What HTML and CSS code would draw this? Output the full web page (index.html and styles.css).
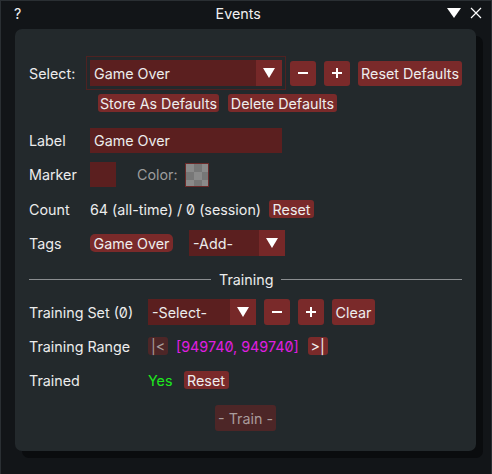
FILE: index.html
```html
<!DOCTYPE html>
<html>
<head>
<meta charset="utf-8">
<link rel="stylesheet" href="styles.css">
</head>
<body>
<div class="window">
  <div class="titlebar">
    <span class="help">?</span>
    <span class="title">Events</span>
    <span class="ctrls">
      <svg class="ico-tri" width="14" height="10" viewBox="0 0 14 10"><polygon points="0,0 14,0 7,10" fill="#fff"/></svg>
      <svg class="ico-x" width="12" height="12" viewBox="0 0 12 12"><path d="M1 1 L11 11 M11 1 L1 11" stroke="#fff" stroke-width="1.2"/></svg>
    </span>
  </div>
  <div class="panel">
    <div class="row r-select">
      <span class="lbl l-select">Select:</span>
      <div class="frame">
        <div class="combo c-select"><span class="ctext">Game Over</span><span class="carrow"><svg width="12" height="10" viewBox="0 0 12 10"><polygon points="0,0 12,0 6,10" fill="#fff"/></svg></span></div>
      </div>
      <button class="btn sq b-minus"><svg width="12" height="12" viewBox="0 0 12 12"><rect x="1" y="5" width="10" height="2" fill="#fff"/></svg></button>
      <button class="btn sq b-plus"><svg width="12" height="12" viewBox="0 0 12 12"><rect x="1" y="5" width="10" height="2" fill="#fff"/><rect x="5" y="1" width="2" height="10" fill="#fff"/></svg></button>
      <button class="btn b-tall b-resetdef">Reset Defaults</button>
    </div>
    <div class="row r-defaults">
      <button class="btn b-small b-store">Store As Defaults</button>
      <button class="btn b-small b-delete">Delete Defaults</button>
    </div>
    <div class="row r-label">
      <span class="lbl l-main">Label</span>
      <div class="input">Game Over</div>
    </div>
    <div class="row r-marker">
      <span class="lbl l-main">Marker</span>
      <div class="swatch"></div>
      <span class="dim">Color:</span>
      <div class="checker"></div>
    </div>
    <div class="row r-count">
      <span class="lbl l-main">Count</span>
      <span class="txt">64 (all-time) / 0 (session)</span>
      <button class="btn b-small b-reset1">Reset</button>
    </div>
    <div class="row r-tags">
      <span class="lbl l-main">Tags</span>
      <button class="btn b-small b-tag">Game Over</button>
      <div class="combo c-add"><span class="ctext">-Add-</span><span class="carrow"><svg width="12" height="10" viewBox="0 0 12 10"><polygon points="0,0 12,0 6,10" fill="#fff"/></svg></span></div>
    </div>
    <div class="row r-sep">
      <span class="line l1"></span>
      <span class="septext">Training</span>
      <span class="line l2"></span>
    </div>
    <div class="row r-tset">
      <span class="lbl l-train">Training Set (0)</span>
      <div class="combo c-tset"><span class="ctext">-Select-</span><span class="carrow"><svg width="12" height="10" viewBox="0 0 12 10"><polygon points="0,0 12,0 6,10" fill="#fff"/></svg></span></div>
      <button class="btn sq b-minus2"><svg width="12" height="12" viewBox="0 0 12 12"><rect x="1" y="5" width="10" height="2" fill="#fff"/></svg></button>
      <button class="btn sq b-plus"><svg width="12" height="12" viewBox="0 0 12 12"><rect x="1" y="5" width="10" height="2" fill="#fff"/><rect x="5" y="1" width="2" height="10" fill="#fff"/></svg></button>
      <button class="btn b-tall b-clear">Clear</button>
    </div>
    <div class="row r-range">
      <span class="lbl l-train">Training Range</span>
      <button class="btn b-small b-dis b-first">|&lt;</button>
      <span class="magenta">[949740, 949740]</span>
      <button class="btn b-small b-last">&gt;|</button>
    </div>
    <div class="row r-trained">
      <span class="lbl l-train">Trained</span>
      <span class="green">Yes</span>
      <button class="btn b-small b-reset2">Reset</button>
    </div>
    <div class="row r-train">
      <button class="btn b-tall b-dis b-trainbtn">- Train -</button>
    </div>
  </div>
</div>
</body>
</html>
```

FILE: styles.css
```css
* { box-sizing: border-box; }
html, body {
  margin: 0;
  padding: 0;
  width: 492px;
  height: 474px;
  overflow: hidden;
  background: #121518;
  font-family: Inter, "Noto Sans", sans-serif;
  font-size: 14.3px;
  font-feature-settings: "zero" 1;
  color: #ececec;
  white-space: nowrap;
}
.window {
  width: 492px;
  height: 490px;
  border: 1px solid #2a2f33;
  background: #121518;
}
.titlebar {
  height: 24px;
  display: flex;
  align-items: center;
  padding: 0 9px 0 13px;
}
.help { color: #f0f0f0; }
.title {
  flex: 1;
  text-align: center;
  color: #f0f0f0;
  padding-left: 8px;
}
.ctrls { display: flex; align-items: center; gap: 9px; }

.panel {
  margin-top: 4px;
  margin-left: 14px;
  width: 461px;
  height: 422px;
  background: #23292c;
  border-radius: 7px;
  box-shadow: 7px 7px 0 0 #0a0c0e;
  padding: 27px 14px 0 14px;
}
.row { display: flex; align-items: center; }
.lbl { flex: none; }
.l-select { width: 57px; }
.l-main { width: 61px; }
.l-train { width: 119px; }

.btn {
  border: none;
  background: #7a2a2a;
  color: #eeeeee;
  font: inherit;
  font-feature-settings: "zero" 1;
  white-space: nowrap;
  border-radius: 3px;
  padding: 0;
  display: flex;
  align-items: center;
  justify-content: center;
  flex: none;
}
.btn.sq { width: 26px; height: 25px; }
.b-tall { height: 25px; }
.b-small { height: 18px; }
.b-dis { background: #4d2627; color: #a99c9c; }

.r-select { height: 34px; }
.frame {
  width: 200px;
  height: 34px;
  border: 1px solid #4e2222;
  padding: 3px;
  flex: none;
}
.combo {
  display: flex;
  height: 100%;
  background: #5b1f1f;
  flex: none;
}
.ctext { flex: 1; padding-left: 4px; display: flex; align-items: center; }
.carrow {
  width: 26px;
  background: #762828;
  display: flex;
  align-items: center;
  justify-content: center;
}
.c-select { height: 26px; }
.b-minus { margin-left: 4px; }
.b-plus { margin-left: 8px; }
.b-resetdef { margin-left: 8px; width: 104px; }

.r-defaults { margin-top: 4px; height: 18px; padding-left: 69px; }
.b-store { width: 121px; }
.b-delete { margin-left: 9px; width: 109px; }

.r-label { margin-top: 16px; height: 25px; }
.input {
  width: 192px;
  height: 25px;
  background: #5b1f1f;
  padding-left: 4px;
  display: flex;
  align-items: center;
}

.r-marker { margin-top: 9px; height: 25px; }
.swatch { width: 26px; height: 25px; background: #5b1f1f; }
.dim { color: #9c9c9c; margin-left: 21px; }
.checker {
  margin-left: 7px;
  width: 24px;
  height: 24px;
  border: 1px solid #6a2a2a;
  background-color: #8a8a8a;
  background-image:
    linear-gradient(45deg, #777 25%, transparent 25%, transparent 75%, #777 75%),
    linear-gradient(45deg, #777 25%, transparent 25%, transparent 75%, #777 75%);
  background-size: 16px 16px;
  background-position: 0 0, 8px 8px;
}

.r-count { margin-top: 13px; height: 18px; }
.b-reset1 { margin-left: 8px; width: 45px; }

.r-tags { margin-top: 12px; height: 26px; }
.b-tag { border-radius: 5px; width: 83px; }
.c-add { margin-left: 16px; width: 96px; height: 26px; }

.r-sep { margin-top: 14px; height: 18px; }
.line { height: 1px; background: #8a8d90; }
.l1 { width: 182px; }
.l2 { flex: 1; }
.septext { margin: 0 8px; }

.r-tset { margin-top: 11px; height: 26px; }
.c-tset { width: 108px; height: 26px; }
.b-minus2 { margin-left: 8px; }
.b-clear { margin-left: 8px; width: 43px; height: 26px; }
.r-tset .btn.sq { height: 26px; }

.r-range { margin-top: 12px; height: 18px; }
.b-first { width: 20px; }
.b-last { width: 20px; margin-left: 9px; }
.magenta { color: #e01ee0; margin-left: 8px; }

.r-trained { margin-top: 16px; height: 18px; }
.green { color: #1ee81e; }
.b-reset2 { margin-left: 11px; width: 45px; }

.r-train { margin-top: 16px; height: 26px; justify-content: center; }
.b-trainbtn { width: 61px; height: 26px; }
```
